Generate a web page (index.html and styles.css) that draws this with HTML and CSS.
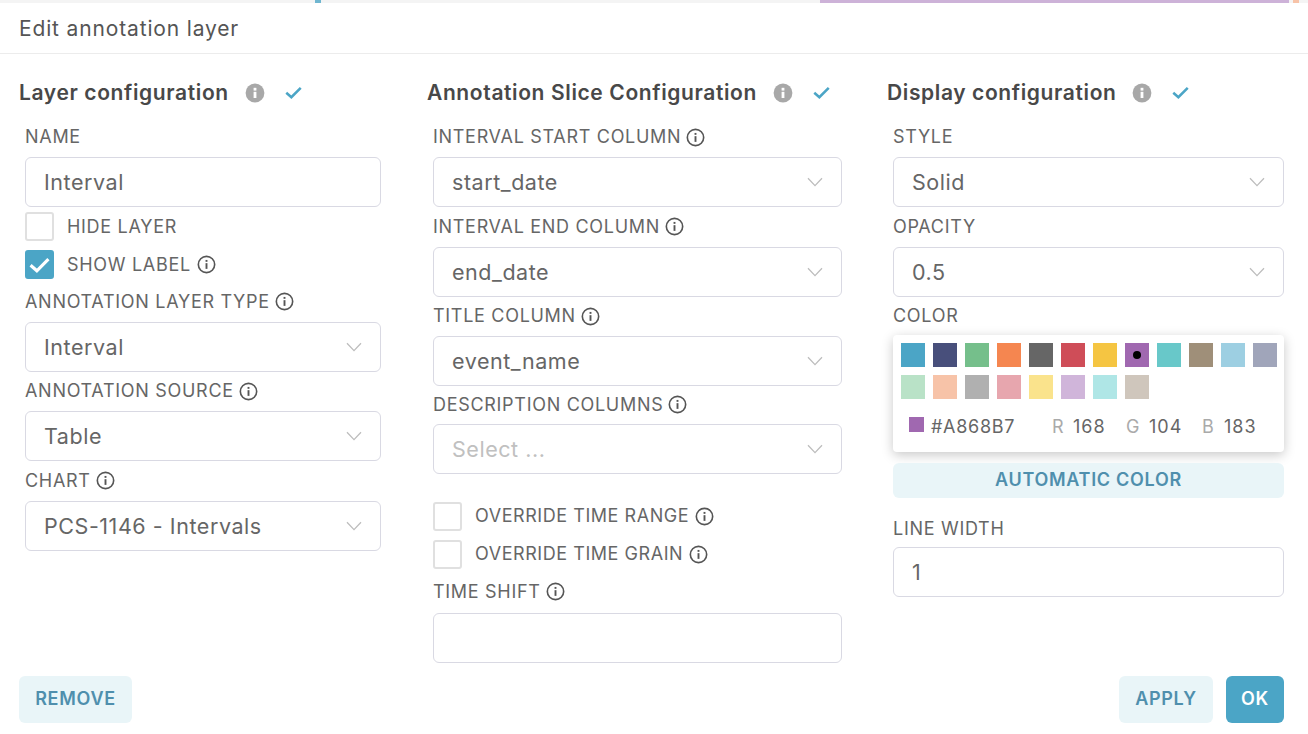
FILE: index.html
```html
<!DOCTYPE html>
<html lang="en">
<head>
<meta charset="utf-8">
<title>Edit annotation layer</title>
<link rel="stylesheet" href="styles.css">
</head>
<body>
<svg class="sprites" width="0" height="0" aria-hidden="true">
  <symbol id="info" viewBox="0 0 20 20"><circle cx="10" cy="10" r="8.6" fill="none" stroke="currentColor" stroke-width="1.7"/><rect x="9" y="8.6" width="2" height="6" fill="currentColor"/><rect x="9" y="5.2" width="2" height="2" fill="currentColor"/></symbol>
  <symbol id="info-fill" viewBox="0 0 20 20"><circle cx="10" cy="10" r="9.4" fill="currentColor"/><rect x="8.6" y="8.8" width="2.8" height="6.2" fill="#fff"/><rect x="8.6" y="4.8" width="2.8" height="2.8" fill="#fff"/></symbol>
  <symbol id="tick" viewBox="0 0 16 12"><path d="M1.2 6.2 6 10.4 14.8 1.6" fill="none" stroke="currentColor" stroke-width="2.4"/></symbol>
  <symbol id="chev" viewBox="0 0 16 10"><path d="M1 1.2 8 8.6 15 1.2" fill="none" stroke="currentColor" stroke-width="1.3"/></symbol>
</svg>
<div class="topstrip"><span class="strip-mark"></span><span class="strip-purple"></span><span class="strip-orange"></span></div>
<header class="modal-head">Edit annotation layer</header>
<main class="columns">
  <section class="col col-a">
    <h2 class="col-title">Layer configuration <svg class="ic-fill"><use href="#info-fill"/></svg><svg class="ic-tick"><use href="#tick"/></svg></h2>
    <div class="fields">
      <div class="field compact"><label class="lbl">NAME</label><div class="box">Interval</div></div>
      <div class="checks after-compact">
        <div class="check"><span class="cb"></span><span class="lbl">HIDE LAYER</span></div>
        <div class="check"><span class="cb on"><svg class="cb-tick"><use href="#tick"/></svg></span><span class="lbl">SHOW LABEL</span><svg class="ic"><use href="#info"/></svg></div>
      </div>
      <div class="field"><label class="lbl">ANNOTATION LAYER TYPE<svg class="ic"><use href="#info"/></svg></label><div class="box sel">Interval<svg class="chev"><use href="#chev"/></svg></div></div>
      <div class="field"><label class="lbl">ANNOTATION SOURCE<svg class="ic"><use href="#info"/></svg></label><div class="box sel">Table<svg class="chev"><use href="#chev"/></svg></div></div>
      <div class="field"><label class="lbl">CHART<svg class="ic"><use href="#info"/></svg></label><div class="box sel">PCS-1146 - Intervals<svg class="chev"><use href="#chev"/></svg></div></div>
    </div>
  </section>
  <section class="col col-b">
    <h2 class="col-title">Annotation Slice Configuration <svg class="ic-fill"><use href="#info-fill"/></svg><svg class="ic-tick"><use href="#tick"/></svg></h2>
    <div class="fields">
      <div class="field"><label class="lbl">INTERVAL START COLUMN<svg class="ic"><use href="#info"/></svg></label><div class="box sel">start_date<svg class="chev"><use href="#chev"/></svg></div></div>
      <div class="field"><label class="lbl">INTERVAL END COLUMN<svg class="ic"><use href="#info"/></svg></label><div class="box sel">end_date<svg class="chev"><use href="#chev"/></svg></div></div>
      <div class="field"><label class="lbl">TITLE COLUMN<svg class="ic"><use href="#info"/></svg></label><div class="box sel">event_name<svg class="chev"><use href="#chev"/></svg></div></div>
      <div class="field multi"><label class="lbl">DESCRIPTION COLUMNS<svg class="ic"><use href="#info"/></svg></label><div class="box sel placeholder">Select ...<svg class="chev"><use href="#chev"/></svg></div></div>
      <div class="checks">
        <div class="check"><span class="cb"></span><span class="lbl">OVERRIDE TIME RANGE</span><svg class="ic"><use href="#info"/></svg></div>
        <div class="check"><span class="cb"></span><span class="lbl">OVERRIDE TIME GRAIN</span><svg class="ic"><use href="#info"/></svg></div>
      </div>
      <div class="field shift"><label class="lbl">TIME SHIFT<svg class="ic"><use href="#info"/></svg></label><div class="box"></div></div>
    </div>
  </section>
  <section class="col col-c">
    <h2 class="col-title">Display configuration <svg class="ic-fill"><use href="#info-fill"/></svg><svg class="ic-tick"><use href="#tick"/></svg></h2>
    <div class="fields">
      <div class="field"><label class="lbl">STYLE</label><div class="box sel">Solid<svg class="chev"><use href="#chev"/></svg></div></div>
      <div class="field"><label class="lbl">OPACITY</label><div class="box sel">0.5<svg class="chev"><use href="#chev"/></svg></div></div>
      <div class="field colorfield"><label class="lbl">COLOR</label>
        <div class="picker">
          <div class="swatches">
            <span class="sw s1"></span><span class="sw s2"></span><span class="sw s3"></span><span class="sw s4"></span><span class="sw s5"></span><span class="sw s6"></span><span class="sw s7"></span><span class="sw s8"><i class="dot"></i></span><span class="sw s9"></span><span class="sw s10"></span><span class="sw s11"></span><span class="sw s12"></span>
            <span class="sw s13"></span><span class="sw s14"></span><span class="sw s15"></span><span class="sw s16"></span><span class="sw s17"></span><span class="sw s18"></span><span class="sw s19"></span><span class="sw s20"></span>
          </div>
          <div class="hexrow">
            <span class="cur"></span><span class="hex">#A868B7</span>
            <span class="ch ch-r">R</span><span class="val">168</span>
            <span class="ch ch-g">G</span><span class="val">104</span>
            <span class="ch ch-b">B</span><span class="val">183</span>
          </div>
        </div>
        <button class="btn btn-auto">AUTOMATIC COLOR</button>
      </div>
      <div class="field linewidth"><label class="lbl">LINE WIDTH</label><div class="box">1</div></div>
    </div>
  </section>
</main>
<footer class="foot">
  <button class="btn btn-remove">REMOVE</button>
  <div class="foot-right"><button class="btn btn-apply">APPLY</button><button class="btn btn-ok">OK</button></div>
</footer>
</body>
</html>
```
FILE: styles.css
```css
* { box-sizing: border-box; }
html, body { margin: 0; padding: 0; }
body { width: 1308px; height: 734px; overflow: hidden; background: #fff; font-family: Inter, "Noto Sans", sans-serif; color: #666; }
.sprites { position: absolute; }
.topstrip { height: 3px; background: #f4f4f4; display: flex; }
.strip-mark { width: 6px; height: 3px; margin-left: 315px; background: #6fb6d0; }
.strip-purple { width: 469px; height: 3px; margin-left: 499px; background: #cdb2d8; }
.strip-orange { width: 6px; height: 3px; margin-left: 4px; background: #f7c3a8; }
.modal-head { height: 51px; padding: 0 19px; border-bottom: 1px solid #ececec; display: flex; align-items: center; font-size: 21px; letter-spacing: .85px; color: #555; }
.columns { display: grid; grid-template-columns: 408px 460px 397px; padding-left: 19px; height: 621px; }
.col-title { margin: 0; padding-top: 24px; box-sizing: content-box; display: flex; align-items: center; font-size: 21px; letter-spacing: .62px; font-weight: 600; color: #484848; white-space: pre; line-height: 30px; height: 30px; }
.ic-fill { width: 20px; height: 20px; color: #a8a8a8; margin-left: 10px; flex: none; }
.ic-tick { width: 17px; height: 13px; color: #4ba5c6; margin-left: 20px; margin-top: -2px; flex: none; }
.fields { padding: 19px 0 0 6px; }
.col-a .fields { padding-right: 46px; }
.col-b .fields { padding-right: 45.5px; }
.col-c .fields { padding-right: 0; }
.field { margin-bottom: 9.5px; }
.field.compact { margin-bottom: 0; }
.lbl { display: flex; align-items: center; height: 20px; margin-bottom: 10px; font-size: 18px; letter-spacing: .7px; color: #666; line-height: 20px; white-space: nowrap; }
.field .lbl .ic { margin-left: 5px; }
.box { height: 50px; border: 1px solid #d9d9e3; border-radius: 6px; padding: 0 18px; display: flex; align-items: center; justify-content: space-between; font-size: 21.5px; letter-spacing: .55px; color: #666; background: #fff; }
.placeholder { color: #c0c0c0; }
.multi { margin-top: -1px; margin-bottom: 0; }
.multi .lbl { margin-bottom: 9px; }
.chev { width: 16px; height: 10px; color: #bdbdbd; flex: none; }
.checks { margin-bottom: 3.6px; }
.after-compact { padding-top: 5px; }
.col-b .checks { padding-top: 28px; margin-bottom: 4px; }
.check { display: flex; align-items: center; height: 38px; padding-bottom: 9px; }
.check .lbl { margin: 0 0 0 13px; }
.col-b .check .lbl { letter-spacing: .55px; }
.check .ic { margin-left: 6px; }
.shift .lbl { margin-bottom: 11px; }
.linewidth .lbl { margin-bottom: 8px; }
.cb { width: 29px; height: 29px; border: 2px solid #e0e0e0; border-radius: 3px; background: #fff; display: flex; align-items: center; justify-content: center; flex: none; }
.cb.on { background: #4ba5c6; border-color: #4ba5c6; }
.cb-tick { width: 21px; height: 16px; color: #fff; }
.ic { width: 19px; height: 19px; color: #555; flex: none; }
.picker { height: 117px; margin-top: -1px; border-radius: 4px; background: #fff; box-shadow: 0 3px 12px rgba(0,0,0,.22); padding: 8px 0 0 8px; overflow: hidden; }
.swatches { display: grid; grid-template-columns: repeat(12, 24px); grid-auto-rows: 24px; gap: 8px; }
.sw { display: flex; align-items: center; justify-content: center; }
.dot { width: 8px; height: 8px; border-radius: 50%; background: #000; }
.s1 { background: #4ba5c6; } .s2 { background: #484f7b; } .s3 { background: #75bf8b; } .s4 { background: #f58650; }
.s5 { background: #666; } .s6 { background: #cf4d58; } .s7 { background: #f5c542; } .s8 { background: #a068b0; }
.s9 { background: #68c8c9; } .s10 { background: #9f8f79; } .s11 { background: #9dcfe2; } .s12 { background: #a0a5ba; }
.s13 { background: #b9e2c7; } .s14 { background: #f7c3a8; } .s15 { background: #b0b0b0; } .s16 { background: #e7a6ae; }
.s17 { background: #fae38c; } .s18 { background: #d0b5da; } .s19 { background: #afe6e6; } .s20 { background: #cfc6bc; }
.hexrow { display: flex; align-items: center; height: 24px; margin-top: 15px; padding-left: 8px; font-size: 18px; letter-spacing: .7px; color: #666; }
.cur { width: 15px; height: 15px; background: #a068b0; margin-top: -4px; flex: none; }
.hex { margin-left: 7px; width: 84px; }
.ch { color: #aaa; }
.ch-r { margin-left: 37px; width: 21px; }
.ch-g { margin-left: 21px; width: 23px; }
.ch-b { margin-left: 21px; width: 22px; }
.val { width: 32px; letter-spacing: 1px; }
.btn { border: 0; border-radius: 6px; font-family: inherit; font-weight: 600; font-size: 18px; letter-spacing: .72px; display: flex; align-items: center; justify-content: center; padding: 0 0 2px; }
.btn-auto { width: 100%; height: 35px; margin-top: 11px; background: #e9f5f8; color: #4f8fad; margin-bottom: 21px; }
.foot { display: flex; justify-content: space-between; align-items: center; padding: 0 24px 0 19px; height: 48px; }
.foot-right { display: flex; gap: 13px; }
.btn-remove { width: 113px; height: 47px; background: #e9f5f8; color: #4f8fad; }
.btn-apply { width: 94px; height: 47px; background: #e9f5f8; color: #4f8fad; }
.btn-ok { width: 58px; height: 47px; background: #4ba5c6; color: #fff; }
```
